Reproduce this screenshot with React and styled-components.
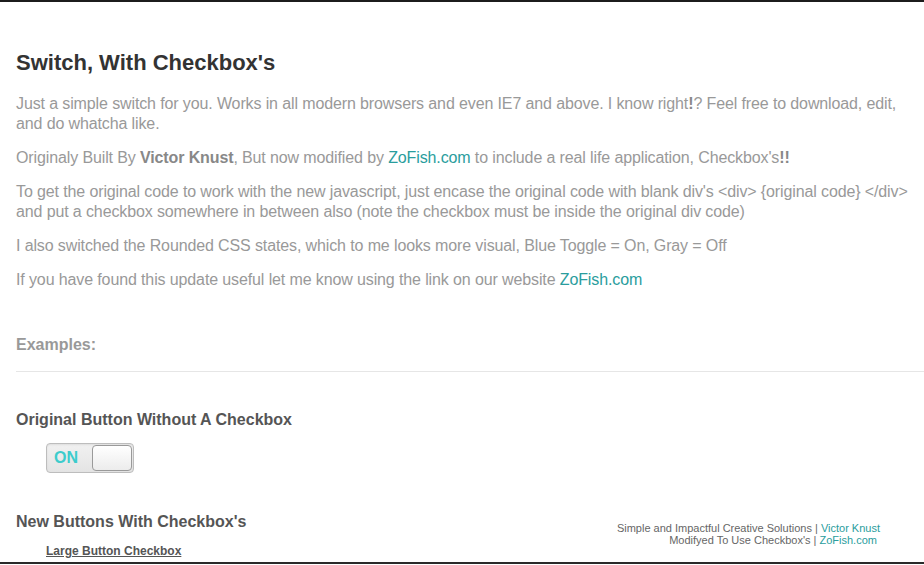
import styled, { createGlobalStyle } from "styled-components";

const GlobalStyle = createGlobalStyle`
    html, body {
        margin: 0;
        padding: 0;
        background: #fff;
    }
    body {
        font-family: "Liberation Sans", Arial, sans-serif;
    }
`

const Frame = styled.div`
    box-sizing: border-box;
    height: 564px;
    overflow: hidden;
    border-top: 2px solid #1c1c1c;
    border-bottom: 2px solid #2a2a2a;
    padding-left: 16px;
`

const Title = styled.h1`
    margin: 48px 0 18px;
    font-size: 22px;
    line-height: 26px;
    font-weight: bold;
    color: #333;
`

const Para = styled.p`
    margin: 0 0 14px;
    font-size: 16px;
    line-height: 20px;
    letter-spacing: -0.12px;
    color: #999;
    b {
        color: #888;
    }
`

const Link = styled.a`
    color: #2a9d9d;
    text-decoration: none;
`

const Label = styled.h3`
    margin: ${p => p.$top || 0}px 0 0;
    font-size: 16px;
    line-height: 20px;
    font-weight: bold;
    color: ${p => p.$muted ? "#999" : "#555"};
`

const Rule = styled.hr`
    margin: 16px 0 0;
    border: 0;
    border-top: 1px solid #e6e6e6;
`

const Switch = styled.div`
    margin: 13px 0 0 30px;
    box-sizing: border-box;
    width: 88px;
    height: 30px;
    display: flex;
    align-items: center;
    justify-content: space-between;
    padding: 0 1px 0 7px;
    border: 1px solid #bdbdbd;
    border-radius: 4px;
    background: linear-gradient(#f1f1f1, #e4e4e4);
    box-shadow: inset 0 1px 2px rgba(0,0,0,0.08);
`

const SwitchText = styled.span`
    font-size: 16px;
    font-weight: bold;
    color: #3dcccc;
`

const Knob = styled.span`
    box-sizing: border-box;
    width: 40px;
    height: 26px;
    border: 1px solid #9a9a9a;
    border-radius: 4px;
    background: linear-gradient(#fff, #ececec);
`

const Row = styled.div`
    display: flex;
    justify-content: space-between;
    align-items: flex-start;
    margin-top: 39px;
`

const SubLink = styled.a`
    display: inline-block;
    margin: 12px 0 0 30px;
    font-size: 12px;
    line-height: 15px;
    font-weight: bold;
    color: #555;
    text-decoration: underline;
`

const Credits = styled.div`
    margin: 10px 44px 0 0;
    text-align: right;
    font-size: 11px;
    line-height: 12px;
    color: #666;
    a {
        color: #2a9d9d;
        text-decoration: none;
    }
`

const App = () => {
    return <Frame>
        <GlobalStyle />
        <Title>Switch, With Checkbox's</Title>
        <Para>Just a simple switch for you. Works in all modern browsers and even IE7 and above. I know right<b>!</b>? Feel free to download, edit, and do whatcha like.</Para>
        <Para>Originaly Built By <b>Victor Knust</b>, But now modified by <Link href="#">ZoFish.com</Link> to include a real life application, Checkbox's<b>!!</b></Para>
        <Para>To get the original code to work with the new javascript, just encase the original code with blank div's &lt;div&gt; {"{original code}"} &lt;/div&gt; and put a checkbox somewhere in between also (note the checkbox must be inside the original div code)</Para>
        <Para>I also switched the Rounded CSS states, which to me looks more visual, Blue Toggle = On, Gray = Off</Para>
        <Para>If you have found this update useful let me know using the link on our website <Link href="#">ZoFish.com</Link></Para>

        <Label $muted $top={45}>Examples:</Label>
        <Rule />

        <Label $top={38}>Original Button Without A Checkbox</Label>
        <Switch>
            <SwitchText>ON</SwitchText>
            <Knob />
        </Switch>

        <Row>
            <div>
                <Label>New Buttons With Checkbox's</Label>
                <SubLink href="#">Large Button Checkbox</SubLink>
            </div>
            <Credits>
                Simple and Impactful Creative Solutions | <a href="#">Victor Knust</a><br />
                Modifyed To Use Checkbox's | <a href="#">ZoFish.com</a>&nbsp;
            </Credits>
        </Row>
    </Frame>
}

export default App;
